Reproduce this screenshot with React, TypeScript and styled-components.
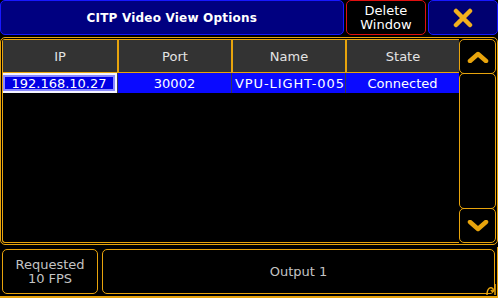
import React from 'react';
import styled, { createGlobalStyle } from 'styled-components';

const GlobalStyle = createGlobalStyle`
  html, body {
    margin: 0;
    padding: 0;
    background: #000;
  }
  body {
    font-family: "DejaVu Sans", "Liberation Sans", sans-serif;
  }
`;

const ORANGE = '#e8a40c';

const Screen = styled.div`
  width: 498px;
  height: 298px;
  background: #000;
  display: flex;
  flex-direction: column;
  gap: 2px;
  overflow: hidden;
`;

const TopBar = styled.div`
  display: flex;
  gap: 2px;
  height: 35px;
`;

const Title = styled.div`
  width: 345px;
  box-sizing: border-box;
  background: #000080;
  border: 1px solid #1818ff;
  border-radius: 5px;
  color: #fff;
  font-weight: bold;
  font-size: 12px;
  letter-spacing: 0.2px;
  display: flex;
  align-items: center;
  justify-content: center;
`;

const TopButton = styled.div<{ $border: string; $bg: string; $width: number }>`
  width: ${({ $width }) => $width}px;
  box-sizing: border-box;
  background: ${({ $bg }) => $bg};
  border: 1px solid ${({ $border }) => $border};
  border-radius: 5px;
  color: #fff;
  font-size: 13px;
  line-height: 14px;
  text-align: center;
  display: flex;
  align-items: center;
  justify-content: center;
`;

const MainPanel = styled.div`
  height: 208px;
  box-sizing: border-box;
  border: 1px solid ${ORANGE};
  border-radius: 5px;
  padding: 1px;
  display: flex;
`;

const TableArea = styled.div`
  flex: 1;
  border: 1px solid ${ORANGE};
  border-right: none;
  border-radius: 3px 0 0 3px;
  display: flex;
  flex-direction: column;
`;

const HeaderRow = styled.div`
  display: grid;
  grid-template-columns: repeat(4, 1fr);
  height: 32px;
  background: #333;
  border-bottom: 1px solid ${ORANGE};
`;

const HeaderCell = styled.div`
  color: #e4e4e4;
  font-size: 13px;
  display: flex;
  align-items: center;
  justify-content: center;
  border-left: 2px solid ${ORANGE};
  &:first-child {
    border-left: none;
  }
`;

const DataRow = styled.div`
  display: grid;
  grid-template-columns: repeat(4, 1fr);
  height: 20px;
  background: #0a0aff;
`;

const DataCell = styled.div<{ $selected?: boolean }>`
  color: #fff;
  font-size: 13px;
  display: flex;
  align-items: center;
  justify-content: center;
  white-space: nowrap;
  overflow: hidden;
  box-sizing: border-box;
  border-left: 1px solid #3a3a50;
  &:first-child {
    border-left: none;
  }
  ${({ $selected }) =>
    $selected &&
    `
    border: 2px solid #f4f4ff;
    box-shadow: inset 0 0 0 2px #8888ff;
    background: #0000e4;
  `}
`;

const ClipCell = styled(DataCell)`
  justify-content: flex-start;
  padding-left: 3px;
  letter-spacing: 0.9px;
`;

const ScrollColumn = styled.div`
  width: 37px;
  display: flex;
  flex-direction: column;
`;

const ScrollButton = styled.div<{ $grow?: boolean }>`
  box-sizing: border-box;
  border: 1px solid ${ORANGE};
  border-radius: 5px;
  height: ${({ $grow }) => ($grow ? 'auto' : '35px')};
  flex: ${({ $grow }) => ($grow ? 1 : 'none')};
  display: flex;
  align-items: center;
  justify-content: center;
  margin-top: -1px;
  &:first-child {
    margin-top: 0;
  }
`;

const BottomBar = styled.div`
  flex: 1;
  display: flex;
  gap: 4px;
  padding: 2px 2px 2px 2px;
  border-bottom: 2px solid ${ORANGE};
  border-right: 1px solid ${ORANGE};
  box-sizing: border-box;
  position: relative;
`;

const BottomButton = styled.div<{ $width?: number }>`
  box-sizing: border-box;
  width: ${({ $width }) => ($width ? `${$width}px` : 'auto')};
  flex: ${({ $width }) => ($width ? 'none' : 1)};
  border: 1px solid ${ORANGE};
  border-radius: 5px;
  color: #c4c4c4;
  font-size: 13px;
  line-height: 14px;
  text-align: center;
  display: flex;
  align-items: center;
  justify-content: center;
`;

const Curl = styled.svg`
  position: absolute;
  right: 0;
  bottom: 0;
`;

const Chevron: React.FC<{ up?: boolean }> = ({ up }) => (
  <svg width="22" height="12" viewBox="0 0 22 12">
    <path
      d={up ? 'M3 10 L11 3 L19 10' : 'M3 2 L11 9 L19 2'}
      fill="none"
      stroke={ORANGE}
      strokeWidth="4.5"
      strokeLinecap="round"
      strokeLinejoin="round"
    />
  </svg>
);

export default function App() {
  return (
    <>
      <GlobalStyle />
      <Screen>
        <TopBar>
          <Title>CITP Video View Options</Title>
          <TopButton $border="#e01010" $bg="#000" $width={81}>
            Delete
            <br />
            Window
          </TopButton>
          <TopButton $border="#1818ff" $bg="#000070" $width={70}>
            <svg width="22" height="20" viewBox="0 0 22 20">
              <path
                d="M4 3 L18 17 M18 3 L4 17"
                stroke="#f2b01e"
                strokeWidth="4.5"
                strokeLinecap="round"
              />
            </svg>
          </TopButton>
        </TopBar>
        <MainPanel>
          <TableArea>
            <HeaderRow>
              <HeaderCell>IP</HeaderCell>
              <HeaderCell>Port</HeaderCell>
              <HeaderCell>Name</HeaderCell>
              <HeaderCell>State</HeaderCell>
            </HeaderRow>
            <DataRow>
              <DataCell $selected>192.168.10.27</DataCell>
              <DataCell>30002</DataCell>
              <ClipCell>VPU-LIGHT-0059</ClipCell>
              <DataCell>Connected</DataCell>
            </DataRow>
          </TableArea>
          <ScrollColumn>
            <ScrollButton>
              <Chevron up />
            </ScrollButton>
            <ScrollButton $grow />
            <ScrollButton>
              <Chevron />
            </ScrollButton>
          </ScrollColumn>
        </MainPanel>
        <BottomBar>
          <BottomButton $width={96}>
            Requested
            <br />
            10 FPS
          </BottomButton>
          <BottomButton>Output 1</BottomButton>
          <Curl width="12" height="14" viewBox="0 0 12 14">
            <path
              d="M2 13 C2 6 6 4 8 7 C9 9 7 10 6 8 M10 13 L10 2"
              fill="none"
              stroke={ORANGE}
              strokeWidth="1.5"
            />
          </Curl>
        </BottomBar>
      </Screen>
    </>
  );
}
